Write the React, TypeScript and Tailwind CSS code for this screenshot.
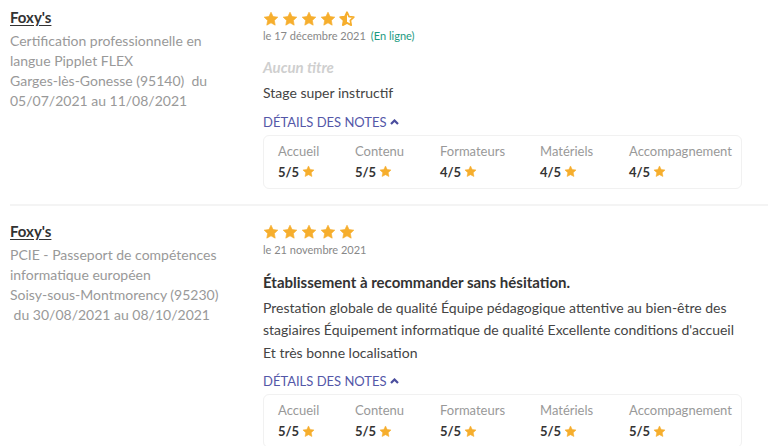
import React from 'react';

const STAR = 'M12 1.8l3.1 6.5 7.1.9-5.2 4.9 1.3 7.1L12 17.8l-6.3 3.4 1.3-7.1-5.2-4.9 7.1-.9z';

const Star: React.FC<{ size: number; half?: boolean }> = ({ size, half }) => (
  <svg width={size} height={size} viewBox="0 0 24 24" className="shrink-0">
    {half ? (
      <>
        <defs>
          <clipPath id="halfclip">
            <rect x="0" y="0" width="12" height="24" />
          </clipPath>
        </defs>
        <path d={STAR} fill="none" stroke="#f6ae2d" strokeWidth="2.6" strokeLinejoin="round" />
        <path d={STAR} fill="#f6ae2d" clipPath="url(#halfclip)" />
      </>
    ) : (
      <path d={STAR} fill="#f6ae2d" stroke="#f6ae2d" strokeWidth="1" strokeLinejoin="round" />
    )}
  </svg>
);

type Note = { label: string; value: string };

type Review = {
  place: React.ReactNode;
  rating: number;
  date: string;
  online?: boolean;
  title?: string;
  body: string;
  notes: Note[];
};

const widths = ['w-[77px]', 'w-[85px]', 'w-[100px]', 'w-[89px]', ''];

const reviews: Review[] = [
  {
    place: (
      <>
        Certification professionnelle en langue Pipplet FLEX
        <br />
        Garges-lès-Gonesse (95140) {'\u00a0'}du 05/07/2021 au 11/08/2021
      </>
    ),
    rating: 4.5,
    date: 'le 17 décembre 2021',
    online: true,
    body: 'Stage super instructif',
    notes: [
      { label: 'Accueil', value: '5/5' },
      { label: 'Contenu', value: '5/5' },
      { label: 'Formateurs', value: '4/5' },
      { label: 'Matériels', value: '4/5' },
      { label: 'Accompagnement', value: '4/5' },
    ],
  },
  {
    place: (
      <>
        PCIE - Passeport de compétences informatique européen
        <br />
        Soisy-sous-Montmorency (95230) {'\u00a0'}du 30/08/2021 au 08/10/2021
      </>
    ),
    rating: 5,
    date: 'le 21 novembre 2021',
    title: 'Établissement à recommander sans hésitation.',
    body: "Prestation globale de qualité Équipe pédagogique attentive au bien-être des stagiaires Équipement informatique de qualité Excellente conditions d'accueil Et très bonne localisation",
    notes: [
      { label: 'Accueil', value: '5/5' },
      { label: 'Contenu', value: '5/5' },
      { label: 'Formateurs', value: '5/5' },
      { label: 'Matériels', value: '5/5' },
      { label: 'Accompagnement', value: '5/5' },
    ],
  },
];

const ReviewItem: React.FC<{ review: Review; first: boolean }> = ({ review, first }) => (
  <div className={`flex border-b-2 border-[#f4f4f4] pb-[15px] ${first ? 'pt-[8px]' : 'pt-[16px]'}`}>
    {/* Left: organisme */}
    <div className="w-[253px] shrink-0">
      <a className="block text-[15px] leading-[18px] font-bold text-[#333] underline underline-offset-2">
        Foxy's
      </a>
      <p className="mt-[5px] w-[224px] text-[14px] leading-[20px] text-[#999]">{review.place}</p>
    </div>

    {/* Right: avis */}
    <div className="w-[480px] shrink-0 pt-[3px]">
      <div className="flex h-[15px] items-center gap-[3px]">
        {[0, 1, 2, 3, 4].map((i) => (
          <Star key={i} size={16} half={review.rating - i === 0.5} />
        ))}
      </div>
      <div className="mt-[3px] text-[11px] leading-[14px] text-[#888]">
        {review.date}
        {review.online && <span className="ml-[5px] text-[#1c9a7f]">(En ligne)</span>}
      </div>
      {review.title ? (
        <div className="mt-[14px] text-[15px] leading-[22px] font-bold text-[#333]">{review.title}</div>
      ) : (
        <div className="mt-[13px] text-[15px] leading-[22px] font-bold italic text-[#cfcfcf]">Aucun titre</div>
      )}
      <p className="mt-[4px] text-[14px] leading-[22.5px] text-[#444]">{review.body}</p>

      <button className="mt-[8px] flex items-center gap-[3px] text-[13px] leading-[18px] text-[#5457a8]">
        DÉTAILS DES NOTES
        <svg width="9" height="6" viewBox="0 0 9 6">
          <polyline points="1,5 4.5,1.5 8,5" fill="none" stroke="#4a4d9e" strokeWidth="2.2" />
        </svg>
      </button>

      <div className="mt-[4px] flex w-[479px] rounded-[6px] border border-[#f1f1f1] pl-[14px] pt-[6px] pb-[7px]">
        {review.notes.map((n, i) => (
          <div key={n.label} className={widths[i]}>
            <div className="text-[13px] leading-[18px] text-[#999]">{n.label}</div>
            <div className="mt-[3px] flex items-center gap-[3px] text-[13px] leading-[18px] font-bold text-[#333]">
              {n.value}
              <Star size={13} />
            </div>
          </div>
        ))}
      </div>
    </div>
  </div>
);

export default function App() {
  return (
    <div className="min-h-screen bg-white pl-[10px] font-['Lato',sans-serif]">
      {reviews.map((r, i) => (
        <ReviewItem key={i} review={r} first={i === 0} />
      ))}
    </div>
  );
}
